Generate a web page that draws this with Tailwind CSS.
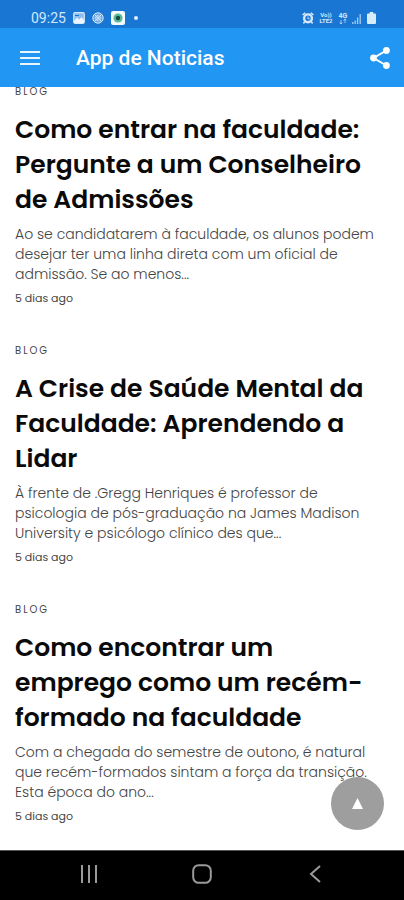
<!DOCTYPE html>
<html lang="pt-BR">
<head>
<meta charset="utf-8">
<meta name="viewport" content="width=device-width, initial-scale=1">
<title>App de Noticias</title>
<script src="https://cdn.jsdelivr.net/npm/@tailwindcss/browser@4"></script>
</head>
<body class="bg-white font-['Poppins','Inter',sans-serif] text-[#0a0a0a]">
<div class="flex h-screen flex-col overflow-hidden">
  <header class="relative z-10 shrink-0 font-['Roboto',sans-serif] text-white">
    <div class="flex h-7 items-center justify-between bg-[#1976d2] pt-2 pr-7 pl-[31px] text-[#d3e8fb]">
      <div class="flex items-center gap-[7px]">
        <span class="text-[14px] leading-4">09:25</span>
        <svg class="h-3 w-3" viewBox="0 0 12 12" aria-hidden="true"><rect x=".7" y=".7" width="10.6" height="10.6" rx="1.2" fill="#8ebcec" stroke="currentColor" stroke-width="1.2"/><path d="M1 9l3-3.5 2.5 2 2-2.5L11 8v3H1z" fill="#eaf5ff"/><path d="M2 3.5h4" stroke="#1976d2"/></svg>
        <svg class="h-3 w-3" viewBox="0 0 12 12" aria-hidden="true"><circle cx="6" cy="6" r="5.2" fill="#6faae6" stroke="currentColor" stroke-width="1"/><circle cx="6" cy="6" r="2.3" fill="none" stroke="currentColor"/><path d="M2.4 2.4l7.2 7.2M9.6 2.4L2.4 9.6" stroke="currentColor" stroke-width=".9"/></svg>
        <svg class="h-[14px] w-[14px]" viewBox="0 0 14 14" aria-hidden="true"><rect width="14" height="14" rx="2" fill="#f4fbf8"/><circle cx="7" cy="7" r="4.6" fill="#5bb89c"/><circle cx="7" cy="7" r="2.2" fill="#174b3f"/></svg>
        <span class="ml-0.5 h-1 w-1 rounded-full bg-[#e6f3ff]"></span>
      </div>
      <div class="flex items-center gap-1">
        <svg class="h-3 w-3" viewBox="0 0 12 12" aria-hidden="true"><circle cx="6" cy="6.3" r="3.9" fill="none" stroke="currentColor" stroke-width="2.4"/><path d="M.6 3L3.2.8M11.4 3L8.8.8M2.8 9.6l-1.4 1.8M9.2 9.6l1.4 1.8" stroke="currentColor" stroke-width="1.6"/><path d="M6 4.5v2.3h1.6" fill="none" stroke="currentColor" stroke-width=".9"/></svg>
        <span class="w-4 text-center text-[6px] leading-[6px] font-bold">Vo))<br>LTE2</span>
        <span class="flex w-[10px] flex-col items-center text-[7px] leading-[6px] font-bold">4G
          <svg class="h-[5px] w-2" viewBox="0 0 8 5" aria-hidden="true"><path d="M2 5V1M.6 3.6L2 5l1.4-1.4M6 0v4M4.6 1.4L6 0l1.4 1.4" fill="none" stroke="currentColor" stroke-width=".7"/></svg>
        </span>
        <svg class="h-[11px] w-[9px]" viewBox="0 0 9 11" aria-hidden="true"><path d="M.8 11V9M3.2 11V7.5M5.6 11V4.5" stroke="#a6cdf3" stroke-width="1.3"/><path d="M8.2 11V1" stroke="#a6cdf3" stroke-width="1.3"/></svg>
        <svg class="ml-0.5 h-3 w-[9px]" viewBox="0 0 9 12" aria-hidden="true"><path d="M2.7 0h3.6v1.500H8q1 0 1 1V11q0 1-1 1H1q-1 0-1-1V2.500q0-1 1-1h1.700z" fill="#d6edf8"/></svg>
      </div>
    </div>
    <div class="flex h-[59px] items-center bg-[#2196f3] pr-3 pl-5">
      <button type="button" aria-label="Menu" class="flex h-5 w-5 items-center">
        <svg class="h-[14px] w-5" viewBox="0 0 20 14" aria-hidden="true"><path d="M0 1h20M0 7h20M0 13h20" stroke="#e8f6ff" stroke-width="2"/></svg>
      </button>
      <h1 class="ml-9 grow text-[21px] leading-6 font-medium">App de Noticias</h1>
      <button type="button" aria-label="Compartilhar" class="flex h-6 w-6 items-center justify-center">
        <svg class="h-[22px] w-5" viewBox="0 0 20 22" aria-hidden="true"><path d="M16.400 3.500L3.500 11l12.900 7.500" fill="none" stroke="#fff" stroke-width="2"/><g fill="#fff"><circle cx="16.400" cy="3.500" r="3.400"/><circle cx="3.500" cy="11" r="3.400"/><circle cx="16.400" cy="18.500" r="3.400"/></g></svg>
      </button>
    </div>
  </header>

  <main class="-mt-[3px] flex min-h-0 grow flex-col gap-[37px] overflow-hidden px-[15px]">
    <article class="shrink-0">
      <p class="text-[10px] leading-4 tracking-[2px] text-[#444]">BLOG</p>
      <h2 class="mt-3 text-[25px] leading-[35px] font-semibold">Como entrar na faculdade:<br>Pergunte a um Conselheiro<br>de Admissões</h2>
      <p class="mt-[7px] text-[14px] leading-5 font-light text-[#444]">Ao se candidatarem à faculdade, os alunos podem<br>desejar ter uma linha direta com um oficial de<br>admissão. Se ao menos...</p>
      <p class="mt-[6px] text-[11px] leading-4 text-[#444]">5 dias ago</p>
    </article>
    <article class="shrink-0">
      <p class="text-[10px] leading-4 tracking-[2px] text-[#444]">BLOG</p>
      <h2 class="mt-3 text-[25px] leading-[35px] font-semibold">A Crise de Saúde Mental da<br>Faculdade: Aprendendo a<br>Lidar</h2>
      <p class="mt-[7px] text-[14px] leading-5 font-light text-[#444]">À frente de .Gregg Henriques é professor de<br>psicologia de pós-graduação na James Madison<br>University e psicólogo clínico des que...</p>
      <p class="mt-[6px] text-[11px] leading-4 text-[#444]">5 dias ago</p>
    </article>
    <article class="shrink-0">
      <p class="text-[10px] leading-4 tracking-[2px] text-[#444]">BLOG</p>
      <h2 class="mt-3 text-[25px] leading-[35px] font-semibold">Como encontrar um<br>emprego como um recém-<br>formado na faculdade</h2>
      <p class="mt-[7px] text-[14px] leading-5 font-light text-[#444]">Com a chegada do semestre de outono, é natural<br>que recém-formados sintam a força da transição.<br>Esta época do ano...</p>
      <p class="mt-[6px] text-[11px] leading-4 text-[#444]">5 dias ago</p>
    </article>
  </main>

  <button type="button" aria-label="Voltar ao topo" class="fixed right-5 bottom-[70px] flex h-[53px] w-[53px] items-center justify-center rounded-full bg-[#9e9e9e]">
    <svg class="h-[11px] w-[11px]" viewBox="0 0 11 11" aria-hidden="true"><path d="M5.500 0L11 11H0z" fill="#fff"/></svg>
  </button>

  <nav aria-label="Sistema" class="flex h-[50px] shrink-0 items-center justify-between border-t border-[#555] bg-black px-[75px] pb-[3px] text-[#9a9a9a]">
    <button type="button" aria-label="Recentes" class="flex h-7 w-7 items-center justify-center"><svg class="h-[18px] w-[18px]" viewBox="0 0 18 18" aria-hidden="true"><path d="M2 0v18M9 0v18M16 0v18" stroke="currentColor" stroke-width="2"/></svg></button>
    <button type="button" aria-label="Início" class="flex h-7 w-7 items-center justify-center"><svg class="h-5 w-5" viewBox="0 0 20 20" aria-hidden="true"><rect x="1.200" y="1.200" width="17.600" height="17.600" rx="5.500" fill="none" stroke="currentColor" stroke-width="2"/></svg></button>
    <button type="button" aria-label="Voltar" class="flex h-7 w-7 items-center justify-center"><svg class="h-[18px] w-3" viewBox="0 0 12 18" aria-hidden="true"><path d="M11 1L2 9l9 8" fill="none" stroke="currentColor" stroke-width="2"/></svg></button>
  </nav>
</div>
</body>
</html>
